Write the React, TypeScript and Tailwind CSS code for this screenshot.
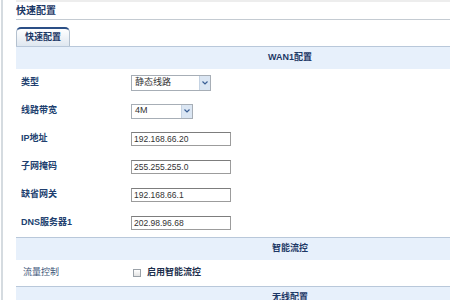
const rows = [
  { label: "类型", kind: "select", value: "静态线路", width: "w-[80px]", h: "h-[16px]" },
  { label: "线路带宽", kind: "select", value: "4M", width: "w-[62px]", h: "h-[15px]" },
  { label: "IP地址", kind: "input", value: "192.168.66.20" },
  { label: "子网掩码", kind: "input", value: "255.255.255.0" },
  { label: "缺省网关", kind: "input", value: "192.168.66.1" },
  { label: "DNS服务器1", kind: "input", value: "202.98.96.68" },
];

function Chevron() {
  return (
    <svg width="6" height="4" viewBox="0 0 6 4">
      <path d="M0.5 0.5 L3 3 L5.5 0.5" fill="none" stroke="#3a5f95" strokeWidth="1.2" />
    </svg>
  );
}

function FakeSelect({ value, width, h }: { value: string; width: string; h: string }) {
  return (
    <div className={`${width} ${h} flex border border-[#a7aeb6] bg-white`}>
      <div className="flex-1 flex items-center pl-[3px] text-[9px] text-[#333]">{value}</div>
      <div className="w-[11px] flex items-center justify-center bg-[#dbe6f3] border-l border-[#c5d3e3]">
        <Chevron />
      </div>
    </div>
  );
}

function SectionHeader({ title }: { title: string }) {
  return (
    <div className="h-[23px] border-t border-[#b9c8da] bg-[#e7f0fb] flex items-center justify-center text-[9px] font-bold text-[#1d3866]">
      {title}
    </div>
  );
}

export default function App() {
  return (
    <div className="w-[450px] h-[300px] overflow-hidden bg-white flex font-['Liberation_Sans','Noto_Sans_CJK_SC',sans-serif]">
      {/* left frame edge */}
      <div className="w-[16px] shrink-0 flex">
        <div className="ml-[1px] w-[2px] bg-[#d5dbe0]" />
      </div>

      <div className="w-[548px] shrink-0">
        <div className="h-[2px] bg-[#ededed]" />
        <div className="h-[18px] border-b border-[#c4cbd2] flex items-center text-[10px] font-bold text-[#1b3765] leading-none">
          快速配置
        </div>

        {/* tabs */}
        <div className="h-[26px] flex items-end">
          <div className="w-[54px] h-[19px] rounded-t-[5px] border-t-2 border-t-[#2b4f86] border-x border-x-[#b4c1cf] bg-gradient-to-b from-white to-[#dfe7f0] flex items-center pl-[8px] text-[9px] font-bold text-[#1b3765]">
            快速配置
          </div>
        </div>

        <SectionHeader title="WAN1配置" />
        {rows.map((r) => (
          <div key={r.label} className="h-[28px] flex items-center">
            <div className="w-[115px] pl-[5px] text-[9px] font-bold text-[#213f6f]">{r.label}</div>
            {r.kind === "select" ? (
              <FakeSelect value={r.value} width={r.width!} h={r.h!} />
            ) : (
              <div className="w-[100px] h-[14px] border border-[#9c9c9c] border-t-[#7d7d7d] flex items-center pl-[2px] text-[8.5px] text-[#333]">
                {r.value}
              </div>
            )}
          </div>
        ))}

        <SectionHeader title="智能流控" />
        <div className="h-[26px] flex items-center">
          <div className="w-[117px] pl-[7px] text-[9px] text-[#3d5679]">流量控制</div>
          <div className="w-[8px] h-[8px] border border-[#9aa1a8] bg-gradient-to-b from-white to-[#e3e3e3]" />
          <div className="ml-[6px] text-[9px] font-bold text-[#1d2f4d]">启用智能流控</div>
        </div>

        <SectionHeader title="无线配置" />
      </div>
    </div>
  );
}
